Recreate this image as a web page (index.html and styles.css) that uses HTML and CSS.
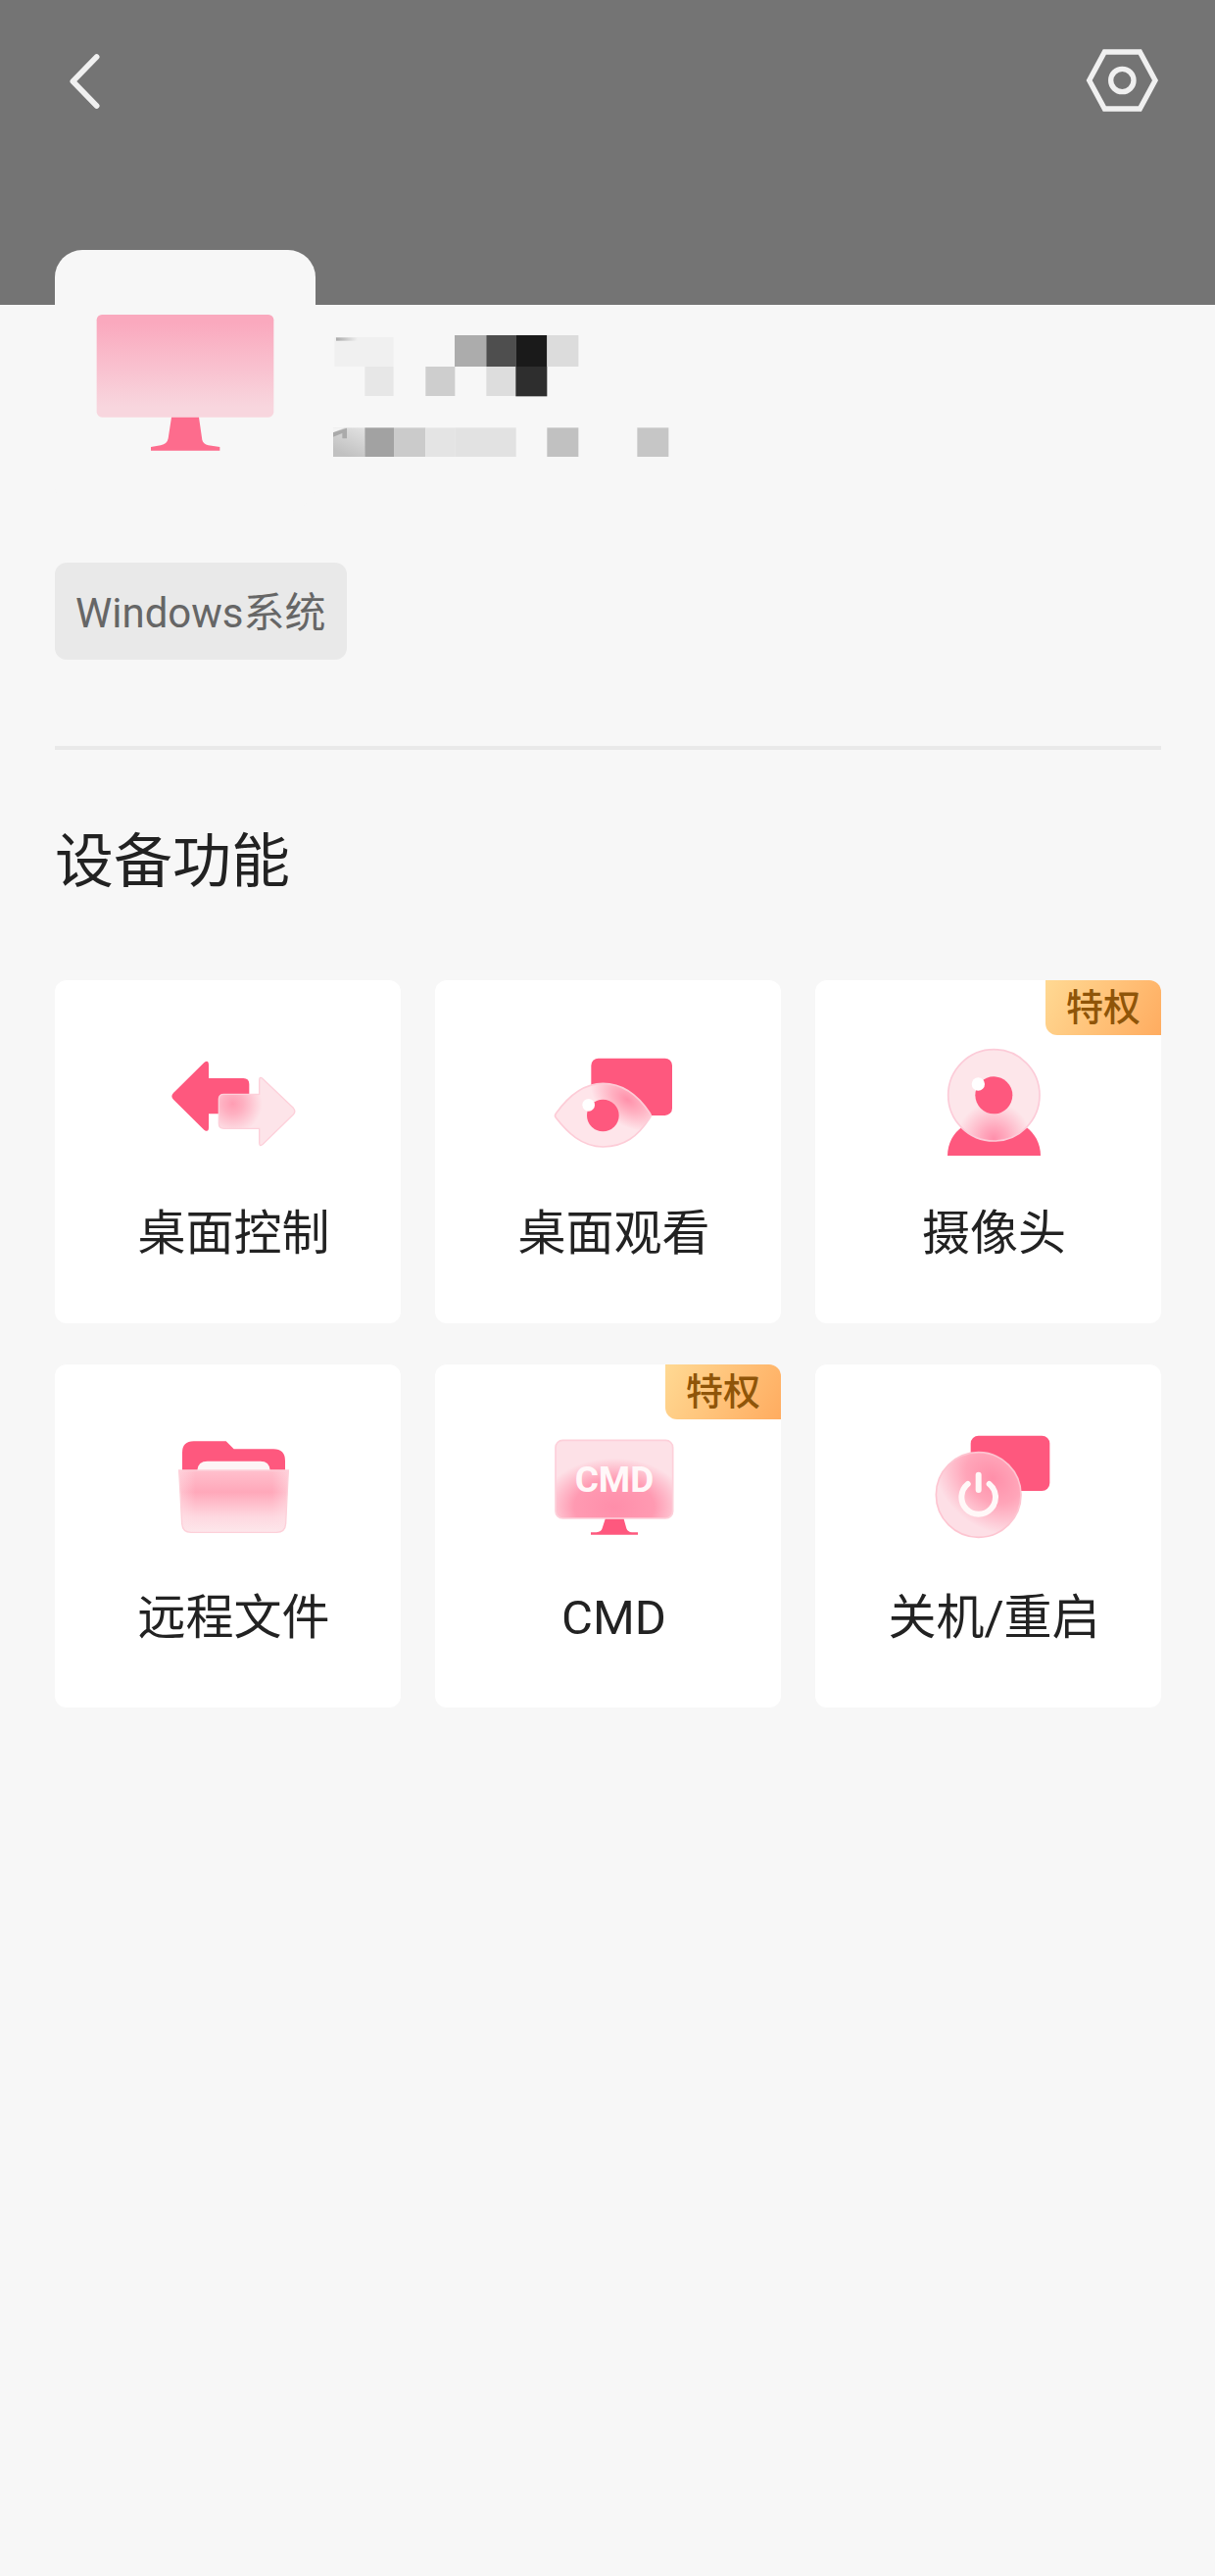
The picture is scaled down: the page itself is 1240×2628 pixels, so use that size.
FILE: index.html
```html
<!DOCTYPE html>
<html lang="zh-CN">
<head>
    <meta charset="UTF-8">
    <meta name="viewport" content="width=device-width, initial-scale=1.0">
    <title>设备功能</title>
    <link rel="stylesheet" href="styles.css">
</head>
<body>
    <header class="topbar">
        <button class="icon-button" type="button" aria-label="返回">
            <svg width="60" height="72" viewBox="168 138 180 216" fill="none" stroke="#f0f0f0" stroke-width="17" stroke-linecap="round" stroke-linejoin="round">
                <path d="M296 174 223 249 296 324"/>
            </svg>
        </button>
        <button class="icon-button" type="button" aria-label="设置">
            <svg width="78" height="72" viewBox="198 138 234 216" fill="none" stroke="#f0f0f0" stroke-width="16">
                <path d="M262 159H370L417 246 370 333H262L215 246Z"/>
                <circle cx="316" cy="246" r="35"/>
            </svg>
        </button>
    </header>

    <main class="content">
        <section class="profile">
            <div class="avatar">
                <svg class="avatar-icon" viewBox="48 45 798 798">
                    <defs>
                        <linearGradient id="screen" x1="0" y1="0" x2="0" y2="1">
                            <stop offset="0.08" stop-color="#faa9be"/>
                            <stop offset="0.9" stop-color="#f8d6de"/>
                        </linearGradient>
                    </defs>
                    <rect x="176" y="243" width="542" height="314" rx="16" fill="url(#screen)"/>
                    <path d="M405 557H489L499 626Q502 639 518 643L553 648V659H342V648L372 643Q392 639 395 622Z" fill="#fd6c8d"/>
                </svg>
            </div>
            <!-- device name and id, masked -->
            <svg class="masked" width="350" height="130" viewBox="60 60 1050 390">
                <defs>
                    <linearGradient id="dash">
                        <stop offset="0" stop-color="#aaaaaa"/>
                        <stop offset="1" stop-color="#f0f0f0"/>
                    </linearGradient>
                    <linearGradient id="corner" x1="1" y1="0" x2="0.5" y2="1">
                        <stop offset="0" stop-color="#e2e2e2"/>
                        <stop offset="1" stop-color="#c1c1c1"/>
                    </linearGradient>
                </defs>
                <rect x="64" y="72" width="181" height="90" fill="#f0f0f0"/>
                <rect x="69" y="73" width="66" height="10" fill="url(#dash)"/>
                <rect x="432" y="66" width="97" height="96" fill="#acacac"/>
                <rect x="529" y="66" width="90" height="96" fill="#4e4e4e"/>
                <rect x="619" y="66" width="96" height="96" fill="#1a1a1a"/>
                <rect x="715" y="66" width="96" height="96" fill="#dcdcdc"/>
                <rect x="157" y="162" width="88" height="90" fill="#e7e7e7"/>
                <rect x="343" y="162" width="90" height="90" fill="#cecece"/>
                <rect x="529" y="162" width="90" height="90" fill="#dddddd"/>
                <rect x="619" y="162" width="96" height="91" fill="#2e2e2e"/>
                <rect x="60" y="349" width="97" height="89" fill="url(#corner)"/>
                <path d="M60 349H96L60 364Z" fill="#f4f4f4"/>
                <path d="M60 364 102 350V382H88V366L60 377Z" fill="#aaaaaa"/>
                <rect x="157" y="349" width="89" height="89" fill="#a2a2a2"/>
                <rect x="246" y="349" width="97" height="89" fill="#cbcbcb"/>
                <rect x="343" y="349" width="90" height="89" fill="#e4e4e4"/>
                <rect x="433" y="349" width="187" height="89" fill="#e2e2e2"/>
                <rect x="715" y="349" width="96" height="89" fill="#c1c1c1"/>
                <rect x="991" y="349" width="96" height="89" fill="#c6c6c6"/>
            </svg>
        </section>

        <span class="tag">Windows系统</span>

        <hr class="divider">

        <h1 class="title">设备功能</h1>

        <div class="grid">
            <button class="card" type="button">
                <svg class="card-icon" viewBox="26 45 480 360">
                    <defs>
                        <radialGradient id="arrow" gradientUnits="userSpaceOnUse" cx="262" cy="228" r="90">
                            <stop offset="0" stop-color="#ff9db3"/>
                            <stop offset="0.35" stop-color="#feb0c1"/>
                            <stop offset="1" stop-color="#fde4e9"/>
                        </radialGradient>
                    </defs>
                    <path d="M80 195 174 102Q188 92 188 110V150H294Q312 150 312 168V259H188V300Q188 318 174 308L80 215Q70 205 80 195Z" fill="#fe587e"/>
                    <path d="M234 199H343V156Q343 143 354 152L447 241Q456 251 447 261L354 352Q343 361 343 348V304H234Q219 304 219 289V214Q219 199 234 199Z" fill="url(#arrow)" stroke="#fdd0da" stroke-width="4"/>
                </svg>
                <span class="card-label">桌面控制</span>
            </button>

            <button class="card" type="button">
                <svg class="card-icon" viewBox="20 45 480 360">
                    <defs>
                        <radialGradient id="eye" gradientUnits="userSpaceOnUse" cx="300" cy="215" r="150" gradientTransform="rotate(35 300 215) translate(0 86) scale(1 0.6)">
                            <stop offset="0" stop-color="#ff90aa"/>
                            <stop offset="0.35" stop-color="#ffb0c1"/>
                            <stop offset="0.85" stop-color="#fee5ea"/>
                        </radialGradient>
                    </defs>
                    <rect x="189" y="89" width="248" height="175" rx="22" fill="#fe587e"/>
                    <path d="M81 258C115 210 165 166 225 166C290 166 338 210 369 257Q374 264 369 271C332 328 290 360 225 360C160 360 115 315 81 271Q76 265 81 258Z" fill="url(#eye)" stroke="#fdccd7" stroke-width="5"/>
                    <circle cx="225" cy="264" r="49" fill="#fe587e"/>
                    <circle cx="181" cy="232" r="19" fill="#ffffff"/>
                </svg>
                <span class="card-label">桌面观看</span>
            </button>

            <button class="card" type="button">
                <span class="badge">特权</span>
                <svg class="card-icon" viewBox="14 225 480 360">
                    <defs>
                        <radialGradient id="lens" gradientUnits="userSpaceOnUse" cx="252" cy="515" r="112">
                            <stop offset="0" stop-color="#ff8fab"/>
                            <stop offset="0.35" stop-color="#ffabbf"/>
                            <stop offset="1" stop-color="#fde6ea"/>
                        </radialGradient>
                    </defs>
                    <path d="M110 567C112 410 393 410 395 567Z" fill="#fe587e"/>
                    <circle cx="252" cy="382" r="140" fill="url(#lens)" stroke="#fccbd8" stroke-width="5"/>
                    <circle cx="252" cy="382" r="57" fill="#fe587e"/>
                    <circle cx="204" cy="348" r="20" fill="#ffffff"/>
                </svg>
                <span class="card-label">摄像头</span>
            </button>

            <button class="card" type="button">
                <svg class="card-icon" viewBox="26 51 480 360">
                    <defs>
                        <linearGradient id="folder" x1="0" y1="0" x2="0" y2="1">
                            <stop offset="0" stop-color="#ffc0cd"/>
                            <stop offset="0.35" stop-color="#ffa8ba"/>
                            <stop offset="0.75" stop-color="#fed8e0"/>
                            <stop offset="1" stop-color="#fde7eb"/>
                        </linearGradient>
                        <linearGradient id="folder-edge">
                            <stop offset="0" stop-color="#fee2e8" stop-opacity="0.5"/>
                            <stop offset="0.15" stop-color="#fee2e8" stop-opacity="0"/>
                            <stop offset="0.85" stop-color="#fee2e8" stop-opacity="0"/>
                            <stop offset="1" stop-color="#fee2e8" stop-opacity="0.5"/>
                        </linearGradient>
                    </defs>
                    <path d="M107 180V126Q107 91 142 91H241L265 115H386Q422 115 422 151V180Z" fill="#fe587e"/>
                    <path d="M153 180Q155 152 184 152H346Q374 152 376 180Z" fill="#fdf5f6"/>
                    <path d="M97 180H432L424 343Q422 370 396 370H134Q108 370 106 343Z" fill="url(#folder)"/>
                    <path d="M97 180H432L424 343Q422 370 396 370H134Q108 370 106 343Z" fill="url(#folder-edge)" stroke="#fdd0d9" stroke-width="4"/>
                </svg>
                <span class="card-label">远程文件</span>
            </button>

            <button class="card" type="button">
                <span class="badge">特权</span>
                <svg class="card-icon" viewBox="20 231 480 360">
                    <defs>
                        <radialGradient id="cmd" cx="0.5" cy="0.85" r="0.62">
                            <stop offset="0" stop-color="#ff8eaa"/>
                            <stop offset="0.55" stop-color="#ff9ab2"/>
                            <stop offset="1" stop-color="#fde1e7"/>
                        </radialGradient>
                    </defs>
                    <rect x="80" y="268" width="359" height="239" rx="22" fill="url(#cmd)" stroke="#fdd0da" stroke-width="5"/>
                    <path d="M232 509H289L297 538Q301 549 314 550H332V557H188V550H205Q220 548 223 537Z" fill="#fe587e"/>
                    <text class="cmd-text" x="260" y="426" text-anchor="middle">CMD</text>
                </svg>
                <span class="card-label">CMD</span>
            </button>

            <button class="card" type="button">
                <svg class="card-icon" viewBox="14 51 480 360">
                    <defs>
                        <radialGradient id="power" gradientUnits="userSpaceOnUse" cx="248" cy="205" r="200" gradientTransform="rotate(40 248 205) translate(0 51) scale(1 0.75)">
                            <stop offset="0" stop-color="#ff8fa9"/>
                            <stop offset="0.45" stop-color="#ffa5b9"/>
                            <stop offset="1" stop-color="#fddfe6"/>
                        </radialGradient>
                    </defs>
                    <rect x="181" y="74" width="242" height="169" rx="24" fill="#fe587e"/>
                    <circle cx="205" cy="255" r="130" fill="url(#power)" stroke="#fdc5d1" stroke-width="5"/>
                    <path d="M172 222A52 52 0 1 0 238 222" fill="none" stroke="#fff8f8" stroke-width="18" stroke-linecap="round"/>
                    <path d="M205 194V240" stroke="#fff8f8" stroke-width="18" stroke-linecap="round"/>
                </svg>
                <span class="card-label">关机/重启</span>
            </button>
        </div>
    </main>
</body>
</html>
```
FILE: styles.css
```css
* {
    box-sizing: border-box;
}

body {
    margin: 0;
    min-height: 100vh;
    background: #f7f7f7;
    color: #222222;
    font-family: Roboto, 'Noto Sans CJK SC', sans-serif;
}

button {
    font-family: inherit;
    color: inherit;
    border: none;
    cursor: pointer;
}

svg {
    display: block;
}

.topbar {
    display: flex;
    justify-content: space-between;
    align-items: flex-start;
    height: 311px;
    padding: 46px 56px 0;
    background: #747474;
}

.icon-button {
    padding: 0;
    background: none;
}

.content {
    padding: 0 55px 56px 56px;
}

.profile {
    display: flex;
    align-items: flex-start;
    gap: 18px;
    margin-top: -56px;
    margin-bottom: 53px;
}

.avatar {
    width: 266px;
    height: 266px;
    border-radius: 28px;
    background: #f7f7f7;
}

.avatar-icon {
    width: 100%;
    height: 100%;
}

.masked {
    margin-top: 85px;
}

.tag {
    display: block;
    width: fit-content;
    padding: 22px 21px 18px;
    border-radius: 12px;
    background: #e9e9e9;
    color: #666666;
    font-size: 42px;
    line-height: 59px;
}

.divider {
    height: 4px;
    margin: 88px 0 73px;
    border: none;
    background: #e9e9e9;
}

.title {
    margin: 0 0 78px;
    font-size: 60px;
    font-weight: 400;
    line-height: 84px;
}

.grid {
    display: grid;
    grid-template-columns: repeat(3, 1fr);
    gap: 42px 35px;
}

.card {
    position: relative;
    display: flex;
    flex-direction: column;
    align-items: center;
    gap: 44px;
    padding: 65px 0 61px 12px;
    border-radius: 12px;
    background: #ffffff;
}

.card-icon {
    width: 160px;
    height: 120px;
}

.card-label {
    font-size: 49px;
    line-height: 60px;
}

.badge {
    position: absolute;
    top: 0;
    right: 0;
    width: 118px;
    border-radius: 0 12px 0 12px;
    background: linear-gradient(120deg, #ffd993, #ffac60);
    color: #8f5509;
    font-size: 38px;
    font-weight: 500;
    line-height: 56px;
    text-align: center;
}

.cmd-text {
    fill: #fff8f9;
    font-size: 111px;
    font-weight: 700;
}
```
